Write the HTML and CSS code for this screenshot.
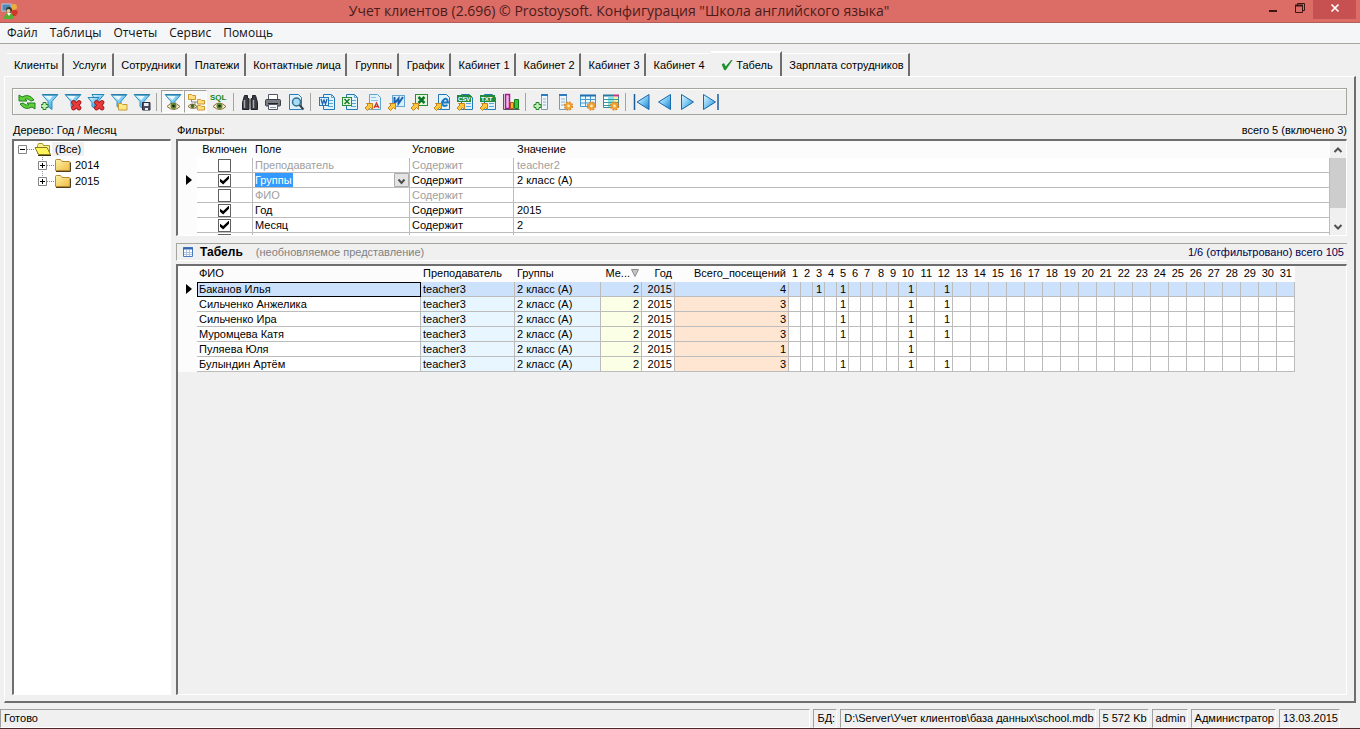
FILE: index.html
```html
<!DOCTYPE html>
<html lang="ru">
<head>
	<meta charset="utf-8">
	<title>Учет клиентов</title>
	<link rel="stylesheet" href="styles.css">
</head>
<body>

<!-- icon sprite -->
<svg class="sprite" aria-hidden="true">
	<defs>
		<linearGradient id="blue" x1="0" y1="0" x2="1" y2="1">
			<stop offset="0" stop-color="#e4f8ff"/>
			<stop offset="0.5" stop-color="#7cc8f2"/>
			<stop offset="1" stop-color="#1580cc"/>
		</linearGradient>
		<linearGradient id="yellow" x1="0" y1="0" x2="1" y2="1">
			<stop offset="0" stop-color="#fff2a8"/>
			<stop offset="1" stop-color="#eebb44"/>
		</linearGradient>
	</defs>
	<symbol id="funnel" viewBox="0 0 18 18">
		<path d="M1 1.5h16l-6 7v8l-4-3v-5z" fill="url(#blue)" stroke="#2f93c4"/>
		<path d="M2 2h14" stroke="#1a6d99"/>
		<path d="M3.500 3h8l-3 4z" fill="#e6f9ff"/>
	</symbol>
	<symbol id="cross" viewBox="0 0 18 18">
		<path d="M9.5 9.5l5.500 5.500m0-5.500l-5.500 5.500" stroke="#a01818" stroke-width="4.6" stroke-linecap="round"/>
		<path d="M9.5 9.5l5.500 5.500m0-5.500l-5.500 5.500" stroke="#ea3a3a" stroke-width="3" stroke-linecap="round"/>
	</symbol>
	<symbol id="eye" viewBox="0 0 18 18">
		<path d="M3 13.5q6-7 13 0q-6 6-13 0z" fill="#f6efd2" stroke="#8d6d3c"/>
		<circle cx="9.5" cy="13" r="3" fill="#5b8a28"/>
		<circle cx="9.5" cy="13" r="1.3" fill="#222"/>
	</symbol>
	<symbol id="doc" viewBox="0 0 18 18">
		<path d="M5.5 1.5h8l3 3v12h-11z" fill="#e3f3fc" stroke="#2379b5"/>
		<path d="M13.5 1.5v3h3M10 7.5h5M10 10.5h5M10 13.5h5" fill="none" stroke="#5aa6d4"/>
	</symbol>
	<symbol id="export" viewBox="0 0 18 18">
		<path d="M2.500 10.500h6v6l-2-2-3 3-2.500-2.500 3-3z" fill="#ffc83c" stroke="#c4821c"/>
	</symbol>
	<symbol id="plus" viewBox="0 0 18 18">
		<path d="M4 9.5h3v2h2v3h-2v2h-3v-2h-2v-3h2z" fill="#c5f0b5" stroke="#23852d"/>
	</symbol>
	<symbol id="gear" viewBox="0 0 18 18">
		<circle cx="12.5" cy="13" r="3.6" fill="none" stroke="#d98318" stroke-width="2" stroke-dasharray="1.8 1"/>
		<circle cx="12.5" cy="13" r="2.4" fill="#ffe8b8" stroke="#efa030" stroke-width="2"/>
	</symbol>
	<symbol id="folder" viewBox="0 0 18 16">
		<path d="M1.500 3.500q0-1 1-1h4l1.500 2h7q1 0 1 1v8h-14.500z" fill="url(#yellow)" stroke="#b98a2c"/>
		<path d="M2 14.500h14.500v-9" fill="none" stroke="#4c4020"/>
	</symbol>
	<symbol id="folder-open" viewBox="0 0 18 16">
		<path d="M3.500 12.500v-8l1-2h4l1 2h6v8z" fill="#fbf28c" stroke="#a8962c"/>
		<path d="M1 6.500h12l3.500 7h-12z" fill="#fff45c" stroke="#8a7c1c"/>
		<path d="M4 14.500h13" stroke="#3b3510"/>
	</symbol>
	<symbol id="marker" viewBox="0 0 6 10">
		<path d="M0 0l6 5l-6 5z" fill="#000"/>
	</symbol>
</svg>

<header class="title-bar">
	<svg class="app-icon" viewBox="0 0 18 18">
		<rect x="1" y="2" width="9" height="7" fill="#4f86b5" stroke="#a9cde2"/>
		<circle cx="13" cy="5" r="3" fill="#e7b13c"/>
		<path d="M11 9q4-3 6 1l-2 4h-4z" fill="#d03828"/>
		<circle cx="8" cy="8" r="3" fill="#303828"/>
		<circle cx="7.500" cy="9" r="2" fill="#e8c49a"/>
		<path d="M3 17q0-6 5-6t4 6z" fill="#54b030"/>
		<path d="M6 11l2 3l2-3z" fill="#fff"/>
	</svg>
	<h1>Учет клиентов (2.696) © Prostoysoft. Конфигурация "Школа английского языка"</h1>
	<div class="win-buttons">
		<button aria-label="Свернуть"><svg viewBox="0 0 12 12"><path d="M2 9h8" stroke="#3c1614" stroke-width="2"/></svg></button>
		<button aria-label="Восстановить"><svg viewBox="0 0 12 12"><path d="M1.500 3.500h7v7h-7zM3.500 3v-1.500h7v7h-1.500" fill="none" stroke="#3c1614"/><path d="M1 3.500h8" stroke="#3c1614" stroke-width="2"/></svg></button>
		<button class="close" aria-label="Закрыть"><svg viewBox="0 0 12 12"><path d="M2.500 2.500l7 7m0-7l-7 7" stroke="#fff" stroke-width="1.700"/></svg></button>
	</div>
</header>

<nav class="menu">
	<a href="#">Файл</a>
	<a href="#">Таблицы</a>
	<a href="#">Отчеты</a>
	<a href="#">Сервис</a>
	<a href="#">Помощь</a>
</nav>

<div class="tabs">
	<button>Клиенты</button>
	<button>Услуги</button>
	<button>Сотрудники</button>
	<button>Платежи</button>
	<button>Контактные лица</button>
	<button>Группы</button>
	<button>График</button>
	<button>Кабинет 1</button>
	<button>Кабинет 2</button>
	<button>Кабинет 3</button>
	<button>Кабинет 4</button>
	<button class="active"><svg viewBox="0 0 12 12"><path d="M1 5.500l2-1l1.500 3.500l6-7l.5.5l-6.500 9.500h-1z" fill="#119a22" stroke="#0c7018" stroke-width=".5"/></svg>Табель</button>
	<button>Зарплата сотрудников</button>
</div>

<main class="panel">
	<div class="toolbar">
		<button aria-label="Обновить"><svg viewBox="0 0 18 18"><path d="M1 2l3 2q7-4 12 3l-3 1q-3-3-6-2l2 2h-8zM17 16l-3-2q-7 4-12-3l3-1q3 3 6 2l-2-2h8z" fill="#62cf36" stroke="#1d8220"/></svg></button>
		<button aria-label="Добавить фильтр"><svg viewBox="0 0 18 18"><use href="#funnel"/><use href="#plus" x="-2"/></svg></button>
		<button aria-label="Удалить фильтр"><svg viewBox="0 0 18 18"><use href="#funnel"/><use href="#cross"/></svg></button>
		<button aria-label="Удалить все фильтры"><svg viewBox="0 0 18 18"><path d="M5 1.500h12l-5 6v7l-3-3v-3z" fill="url(#blue)" stroke="#2387b8"/><path d="M1 4.500h11l-4 5v6l-3-2v-4z" fill="url(#blue)" stroke="#2387b8"/><use href="#cross"/></svg></button>
		<button aria-label="Открыть фильтр"><svg viewBox="0 0 18 18"><use href="#funnel"/><path d="M8.500 10.500h3l1 1h4.500v5.500h-8.500z" fill="#ffe887" stroke="#c69b35"/></svg></button>
		<button aria-label="Сохранить фильтр"><svg viewBox="0 0 18 18"><use href="#funnel"/><path d="M9.500 9.500h7.500v7.500h-7.500z" fill="#4c4c60" stroke="#2c2c3c"/><path d="M11 10h4.500v3h-4.500zM12 15h3v2h-3z" fill="#e8edf5"/></svg></button>
		<i class="sep"></i>
		<button class="pressed" aria-label="Показать фильтры"><svg viewBox="0 0 18 18"><use href="#funnel"/><use href="#eye"/></svg></button>
		<button class="pressed" aria-label="Показать дерево"><svg viewBox="0 0 18 18"><path d="M4.500 5v4h6M8 9v6h3" fill="none" stroke="#888"/><path d="M1.500 1.500h3l1 1h3v4h-7zM10.500 6.500h3l1 1h3v3.500h-7zM10.500 12.500h3l1 1h3v3.500h-7z" fill="#ffe07a" stroke="#cf9932"/><path d="M1 13.500q4-5 9 0q-4 4-9 0z" fill="#f6efd2" stroke="#8d6d3c"/><circle cx="5.500" cy="13" r="2" fill="#456b20"/></svg></button>
		<button aria-label="Показать SQL"><svg viewBox="0 0 18 18"><text class="sql" x="0" y="7">SQL</text><use href="#eye"/></svg></button>
		<i class="sep"></i>
		<button aria-label="Найти"><svg viewBox="0 0 18 18"><path d="M3.500 2.500h3v3h1.500v11h-6.500v-7zM11.500 2.500h3l2 7v7h-6.500v-11h1.500z" fill="#3a3a42" stroke="#202026"/><path d="M8 6.500h2v4h-2z" fill="#777"/><path d="M3.500 7v8M12.500 7v8" stroke="#a8a8b0" stroke-width="1.500"/></svg></button>
		<button aria-label="Печать"><svg viewBox="0 0 18 18"><path d="M4.500 6.500v-5h9v5" fill="#fff" stroke="#556"/><rect x="1.500" y="6.500" width="15" height="6.500" rx="1" fill="#787d86" stroke="#3c4048"/><path d="M4 10.500h10" stroke="#222"/><path d="M4.500 11.500h9v5h-9z" fill="#f6f8fa" stroke="#556"/><path d="M6 14.500h6" stroke="#89a"/></svg></button>
		<button aria-label="Просмотр"><svg viewBox="0 0 18 18"><path d="M2.500 1.500h9l3 3v12h-12z" fill="#dff1fb" stroke="#2a7cb4"/><circle cx="9.500" cy="9" r="4" fill="#a8dcf6" stroke="#31708e" stroke-width="1.500"/><path d="M12.500 12l4 4.500" stroke="#3b4550" stroke-width="2"/></svg></button>
		<i class="sep"></i>
		<button aria-label="Word"><svg viewBox="0 0 18 18"><use href="#doc"/><rect x="1.500" y="4.500" width="9" height="8" fill="#dff1ff" stroke="#2477bd"/><path d="M3 6l1.500 5l1.500-4l1.500 4l1.500-5" fill="none" stroke="#1d62ae" stroke-width="1.300"/></svg></button>
		<button aria-label="Excel"><svg viewBox="0 0 18 18"><use href="#doc"/><rect x="1.500" y="4.500" width="9" height="8" fill="#e6f8df" stroke="#2b8c38"/><path d="M3.500 6l5 5m0-5l-5 5" stroke="#17792a" stroke-width="1.500"/></svg></button>
		<button aria-label="Экспорт RTF"><svg viewBox="0 0 18 18"><path d="M5.500 1.500h8l3 3v12h-11z" fill="#e3f3fc" stroke="#5aa6d4"/><path d="M7 4.500h5M7 7.500h7" stroke="#8cc3e4"/><path d="M10 15l2.500-5l2.500 5M11 13.500h3.500" fill="none" stroke="#cc3522" stroke-width="1.300"/><use href="#export"/></svg></button>
		<button aria-label="Экспорт Word"><svg viewBox="0 0 18 18"><rect x="5.500" y="2.500" width="12" height="11" fill="#d9efff" stroke="#64a7d5"/><path d="M7.500 4v6.500l4-5v5l4.500-6.500" fill="none" stroke="#1d62ae" stroke-width="2"/><use href="#export"/></svg></button>
		<button aria-label="Экспорт Excel"><svg viewBox="0 0 18 18"><rect x="5.500" y="1.500" width="12" height="11" fill="#e5f7de" stroke="#2b8c38"/><path d="M8.500 4l6 6m0-6l-6 6" stroke="#0c7427" stroke-width="2.500"/><use href="#export"/></svg></button>
		<button aria-label="Экспорт HTML"><svg viewBox="0 0 18 18"><path d="M5.500 1.500h8l3 3v12h-11z" fill="#e3f3fc" stroke="#2379b5"/><path d="M14.500 12q-3.500 2-5-.5t1.500-5t4 3h-6" fill="none" stroke="#1b79c4" stroke-width="2"/><use href="#export"/></svg></button>
		<button aria-label="Экспорт CSV"><svg viewBox="0 0 18 18"><use href="#doc"/><rect x="1" y="2" width="14" height="7" fill="#238a39"/><text class="fmt" x="2" y="8">CSV</text><use href="#export"/></svg></button>
		<button aria-label="Экспорт TXT"><svg viewBox="0 0 18 18"><use href="#doc"/><rect x="1" y="2" width="15" height="7" fill="#238a39"/><text class="fmt" x="2" y="8">TXT</text><use href="#export"/></svg></button>
		<button aria-label="Диаграмма"><svg viewBox="0 0 18 18"><path d="M1.500 1v15.500h16" fill="none" stroke="#555"/><path d="M3.500 1.500h4v14h-4z" fill="#f4b4ea" stroke="#a01c8c" stroke-width="1.500"/><path d="M8.500 9.500h3v6h-3z" fill="#ffb030" stroke="#c6501a"/><path d="M12.500 6.500h4v9h-4z" fill="#3cc43c" stroke="#157d20"/></svg></button>
		<i class="sep"></i>
		<button aria-label="Добавить столбец"><svg viewBox="0 0 18 18"><path d="M8.500 1.500h6v15h-6z" fill="#edf6fc" stroke="#8198ad"/><path d="M8 2h7" stroke="#2e7bc0" stroke-width="2"/><path d="M10 6h3m-3 3h3m-3 3h3" stroke="#90b0c8"/><use href="#plus" x="-1"/></svg></button>
		<button aria-label="Настройка столбца"><svg viewBox="0 0 18 18"><path d="M3.500 1.500h7v15h-7z" fill="#edf6fc" stroke="#8198ad"/><path d="M3 2h8" stroke="#2e7bc0" stroke-width="2"/><path d="M5 6h4m-4 3h4m-4 3h4" stroke="#90b0c8"/><use href="#gear"/></svg></button>
		<button aria-label="Настройка таблицы"><svg viewBox="0 0 18 18"><path d="M1.500 2.500h15v11h-15zM1 6.500h16M1 10h16M6.500 3v11M11.500 3v11" fill="#eaf7ff" stroke="#4499cf"/><path d="M1 2.500h16" stroke="#216faf" stroke-width="2"/><use href="#gear"/></svg></button>
		<button aria-label="Цвета таблицы"><svg viewBox="0 0 18 18"><path d="M1.500 2.500h15v12h-15z" fill="#fff" stroke="#408a9b"/><path d="M6 4h6v10h-6z" fill="#83e5ea"/><path d="M12 4h4v10h-4z" fill="#fff0a0"/><path d="M2 6.500h14M2 9.500h14M2 12.500h14" stroke="#3e9a9b"/><path d="M1 2.500h10" stroke="#277b9c" stroke-width="2"/><path d="M11 2.500h6" stroke="#c43a7a" stroke-width="2"/><use href="#gear"/></svg></button>
		<i class="sep"></i>
		<button aria-label="Первая"><svg viewBox="0 0 18 18"><path d="M1.500 1v16" stroke="#1c5d9c" stroke-width="1.500"/><path d="M16 1.500v15l-12-7.500z" fill="url(#blue)" stroke="#1769ac"/></svg></button>
		<button aria-label="Предыдущая"><svg viewBox="0 0 18 18"><path d="M14.500 1.500v15l-12-7.500z" fill="url(#blue)" stroke="#1769ac"/></svg></button>
		<button aria-label="Следующая"><svg viewBox="0 0 18 18"><path d="M2.500 1.500v15l12-7.500z" fill="url(#blue)" stroke="#1769ac"/></svg></button>
		<button aria-label="Последняя"><svg viewBox="0 0 18 18"><path d="M1.500 1.500v15l12-7.500z" fill="url(#blue)" stroke="#1769ac"/><path d="M16 1v16" stroke="#1c5d9c" stroke-width="1.500"/></svg></button>
	</div>

	<div class="columns">
		<section class="side">
			<div class="label">Дерево: Год / Месяц</div>
			<div class="sunken tree">
				<div class="node">
					<svg class="box" viewBox="0 0 9 9"><path d="M.5.5h8v8h-8z" fill="#fff" stroke="#848484"/><path d="M2 4.500h5" stroke="#000"/></svg>
					<i class="dots"></i>
					<svg class="folder"><use href="#folder-open"/></svg>
					<span class="current">(Все)</span>
				</div>
				<div class="branch">
					<div class="node">
						<svg class="box" viewBox="0 0 9 9"><path d="M.5.5h8v8h-8z" fill="#fff" stroke="#848484"/><path d="M2 4.500h5M4.500 2v5" stroke="#000"/></svg>
						<i class="dots"></i>
						<svg class="folder"><use href="#folder"/></svg>
						<span>2014</span>
					</div>
					<div class="node">
						<svg class="box" viewBox="0 0 9 9"><path d="M.5.5h8v8h-8z" fill="#fff" stroke="#848484"/><path d="M2 4.500h5M4.500 2v5" stroke="#000"/></svg>
						<i class="dots"></i>
						<svg class="folder"><use href="#folder"/></svg>
						<span>2015</span>
					</div>
				</div>
			</div>
		</section>

		<section class="work">
			<div class="label"><span>Фильтры:</span><span>всего 5 (включено 3)</span></div>
			<div class="sunken filters">
				<table class="filter-table">
					<colgroup><col class="c-mark"><col class="c-on"><col class="c-field"><col class="c-cond"><col></colgroup>
					<thead>
						<tr><th></th><th>Включен</th><th>Поле</th><th>Условие</th><th>Значение</th></tr>
					</thead>
					<tbody>
						<tr class="off"><td></td><td><input type="checkbox" aria-label="Преподаватель"></td><td>Преподаватель</td><td>Содержит</td><td>teacher2</td></tr>
						<tr>
							<td><svg class="marker"><use href="#marker"/></svg></td>
							<td><input type="checkbox" aria-label="Группы" checked></td>
							<td class="edit">
								<select aria-label="Поле"><option>Группы</option><option>ФИО</option><option>Год</option><option>Месяц</option></select>
								<svg class="arrow" viewBox="0 0 15 14"><path d="M.5.5h14v13h-14z" fill="#e4e4e4" stroke="#adadad"/><path d="M4.500 6.500l3 3.500l3-3.500" fill="none" stroke="#505050" stroke-width="2"/></svg>
							</td>
							<td>Содержит</td><td>2 класс (А)</td>
						</tr>
						<tr class="off"><td></td><td><input type="checkbox" aria-label="ФИО"></td><td>ФИО</td><td>Содержит</td><td></td></tr>
						<tr><td></td><td><input type="checkbox" aria-label="Год" checked></td><td>Год</td><td>Содержит</td><td>2015</td></tr>
						<tr><td></td><td><input type="checkbox" aria-label="Месяц" checked></td><td>Месяц</td><td>Содержит</td><td>2</td></tr>
						<tr><td></td><td><input type="checkbox" aria-label="Новый фильтр"></td><td></td><td></td><td></td></tr>
					</tbody>
				</table>
				<div class="scrollbar">
					<button aria-label="Вверх"><svg viewBox="0 0 10 8"><path d="M1.500 6l3.500-3.500l3.500 3.500" fill="none" stroke="#505050" stroke-width="2"/></svg></button>
					<div class="thumb"></div>
					<button aria-label="Вниз"><svg viewBox="0 0 10 8"><path d="M1.500 2l3.500 3.500l3.500-3.500" fill="none" stroke="#505050" stroke-width="2"/></svg></button>
				</div>
			</div>

			<div class="caption">
				<svg viewBox="0 0 10 10"><path d="M.5.500h9v9h-9z" fill="#fff" stroke="#4a7cc0"/><path d="M0 1.500h10" stroke="#3567b5" stroke-width="2"/><path d="M1 5.500h8M1 7.500h8M3.500 3v6M6.500 3v6" stroke="#a8c4e8"/></svg>
				<h2>Табель</h2>
				<span class="note">(необновляемое представление)</span>
				<span class="count">1/6 (отфильтровано) всего 105</span>
			</div>

			<div class="sunken grid">
				<table class="data">
					<colgroup>
						<col class="c-mark"><col class="c-name"><col class="c-teacher"><col class="c-group"><col class="c-month"><col class="c-year"><col class="c-total">
						<col class="d1" span="7"><col class="d8"><col class="d1"><col class="d10" span="22">
					</colgroup>
					<thead>
						<tr>
							<th></th><th>ФИО</th><th>Преподаватель</th><th>Группы</th>
							<th class="sorted">Ме...<svg viewBox="0 0 8 8"><path d="M.5.500h7l-3.500 7z" fill="#c4c4c4" stroke="#8c8c8c"/></svg></th>
							<th class="num">Год</th><th class="num">Всего_посещений</th>
							<th>1</th><th>2</th><th>3</th><th>4</th><th>5</th><th>6</th><th>7</th><th>8</th><th>9</th><th>10</th><th>11</th><th>12</th><th>13</th><th>14</th><th>15</th><th>16</th><th>17</th><th>18</th><th>19</th><th>20</th><th>21</th><th>22</th><th>23</th><th>24</th><th>25</th><th>26</th><th>27</th><th>28</th><th>29</th><th>30</th><th>31</th>
						</tr>
					</thead>
					<tbody>
						<tr class="selected">
							<td><svg class="marker"><use href="#marker"/></svg></td><td>Баканов Илья</td><td>teacher3</td><td>2 класс (А)</td><td>2</td><td>2015</td><td>4</td>
							<td></td><td></td><td>1</td><td></td><td>1</td><td></td><td></td><td></td><td></td><td>1</td><td></td><td>1</td><td></td><td></td><td></td><td></td><td></td><td></td><td></td><td></td><td></td><td></td><td></td><td></td><td></td><td></td><td></td><td></td><td></td><td></td><td></td>
						</tr>
						<tr>
							<td></td><td>Сильченко Анжелика</td><td>teacher3</td><td>2 класс (А)</td><td>2</td><td>2015</td><td>3</td>
							<td></td><td></td><td></td><td></td><td>1</td><td></td><td></td><td></td><td></td><td>1</td><td></td><td>1</td><td></td><td></td><td></td><td></td><td></td><td></td><td></td><td></td><td></td><td></td><td></td><td></td><td></td><td></td><td></td><td></td><td></td><td></td><td></td>
						</tr>
						<tr>
							<td></td><td>Сильченко Ира</td><td>teacher3</td><td>2 класс (А)</td><td>2</td><td>2015</td><td>3</td>
							<td></td><td></td><td></td><td></td><td>1</td><td></td><td></td><td></td><td></td><td>1</td><td></td><td>1</td><td></td><td></td><td></td><td></td><td></td><td></td><td></td><td></td><td></td><td></td><td></td><td></td><td></td><td></td><td></td><td></td><td></td><td></td><td></td>
						</tr>
						<tr>
							<td></td><td>Муромцева Катя</td><td>teacher3</td><td>2 класс (А)</td><td>2</td><td>2015</td><td>3</td>
							<td></td><td></td><td></td><td></td><td>1</td><td></td><td></td><td></td><td></td><td>1</td><td></td><td>1</td><td></td><td></td><td></td><td></td><td></td><td></td><td></td><td></td><td></td><td></td><td></td><td></td><td></td><td></td><td></td><td></td><td></td><td></td><td></td>
						</tr>
						<tr>
							<td></td><td>Пуляева Юля</td><td>teacher3</td><td>2 класс (А)</td><td>2</td><td>2015</td><td>1</td>
							<td></td><td></td><td></td><td></td><td></td><td></td><td></td><td></td><td></td><td>1</td><td></td><td></td><td></td><td></td><td></td><td></td><td></td><td></td><td></td><td></td><td></td><td></td><td></td><td></td><td></td><td></td><td></td><td></td><td></td><td></td><td></td>
						</tr>
						<tr>
							<td></td><td>Булындин Артём</td><td>teacher3</td><td>2 класс (А)</td><td>2</td><td>2015</td><td>3</td>
							<td></td><td></td><td></td><td></td><td>1</td><td></td><td></td><td></td><td></td><td>1</td><td></td><td>1</td><td></td><td></td><td></td><td></td><td></td><td></td><td></td><td></td><td></td><td></td><td></td><td></td><td></td><td></td><td></td><td></td><td></td><td></td><td></td>
						</tr>
					</tbody>
				</table>
			</div>
		</section>
	</div>
</main>

<footer class="status">
	<span class="grow">Готово</span>
	<span>БД:</span>
	<span>D:\Server\Учет клиентов\база данных\school.mdb</span>
	<span>5 572 Kb</span>
	<span>admin</span>
	<span>Администратор</span>
	<span>13.03.2015</span>
</footer>

</body>
</html>
```
FILE: styles.css
```css
* {
	box-sizing: border-box;
}

body {
	margin: 0;
	min-height: 100vh;
	display: flex;
	flex-direction: column;
	background-color: #f0f0f0;
	color: #000;
	font: 11px/14px "Liberation Sans", Arial, sans-serif;
}

button,
select {
	font: inherit;
	color: inherit;
	padding: 0;
	border: 0;
	background: none;
}

.sprite {
	position: absolute;
	width: 0;
	height: 0;
}

/* title */
.title-bar {
	height: 23px;
	display: flex;
	align-items: center;
	background-color: #dc6c66;
	border-bottom: 1px solid #b25e58;
}

.app-icon {
	width: 18px;
	height: 18px;
	margin-left: 1px;
}

h1 {
	flex: 1;
	margin: 0;
	padding-right: 40px;
	text-align: center;
	font: 14px/22px "Open Sans", sans-serif;
	color: #4a1c1a;
}

.win-buttons {
	align-self: flex-start;
	display: flex;
	padding-right: 4px;
}

.win-buttons button {
	width: 27px;
	height: 19px;
}

.win-buttons svg {
	width: 12px;
	height: 12px;
}

.win-buttons .close {
	width: 43px;
	background-color: #c75050;
}

/* menu */
.menu {
	height: 21px;
	display: flex;
	padding-left: 1px;
	background-color: #f5f6f7;
	border-bottom: 1px solid #a5a59b;
}

.menu a {
	padding: 0 6px;
	font: 12px/19px "Open Sans", sans-serif;
	color: #111;
	text-decoration: none;
}

/* tabs */
.tabs {
	display: grid;
	grid-template-columns: 57px 50px 73px 59px 101px 52px 52px 65px 65px 65px 65px 71px 128px;
	align-items: end;
	height: 32px;
	padding-left: 7px;
}

.tabs button {
	height: 23px;
	padding-left: 3px;
	white-space: nowrap;
	border-top: 1px solid #fff;
	border-right: 2px solid #6e6e6e;
}

.tabs button:nth-child(11) {
	border-right-color: transparent;
}

.tabs .active {
	height: 25px;
	display: flex;
	align-items: center;
	justify-content: center;
	gap: 3px;
	border-top-width: 2px;
}

.tabs svg {
	width: 12px;
	height: 12px;
}

.panel {
	flex: 1;
	display: flex;
	flex-direction: column;
	margin: 0 4px 6px;
	padding: 11px 7px 6px;
	border: 1px solid #fff;
	border-right: 2px solid #6e6e6e;
	border-bottom: 2px solid #6e6e6e;
}

/* toolbar */
.toolbar {
	display: flex;
	align-items: center;
	height: 27px;
	padding-left: 2px;
	border: 1px solid #a5a59f;
	box-shadow: inset 1px 1px #fff;
}

.toolbar button {
	width: 23px;
	height: 23px;
	display: flex;
	align-items: center;
	justify-content: center;
}

.toolbar .pressed {
	background-color: #f8f8f8;
	border: 1px solid;
	border-color: #a0a0a0 #fff #fff #a0a0a0;
}

.toolbar svg {
	flex: none;
	width: 18px;
	height: 18px;
}

.sep {
	width: 8px;
	height: 18px;
	border-left: 3px solid transparent;
	background: linear-gradient(#a5a59f, #a5a59f) no-repeat 0 0 / 1px 18px;
}

.sql {
	font: bold 8px "Liberation Sans", sans-serif;
	fill: #14881c;
}

.fmt {
	font: bold 6px "Liberation Sans", sans-serif;
	fill: #fff;
}

/* content */
.columns {
	flex: 1;
	display: grid;
	grid-template-columns: 159px minmax(0, 1fr);
	gap: 5px;
}

.side,
.work {
	display: flex;
	flex-direction: column;
}

.label {
	display: flex;
	justify-content: space-between;
	height: 24px;
	padding: 8px 0 0 1px;
}

.sunken {
	border: 1px solid #fff;
	border-top: 2px solid #6e6e6e;
	border-left: 2px solid #6e6e6e;
	background-color: #fff;
}

.tree {
	flex: 1;
	padding-left: 4px;
}

.node {
	display: flex;
	align-items: center;
	height: 16px;
}

.box {
	width: 9px;
	height: 9px;
}

.dots {
	width: 7px;
	border-top: 1px dotted #808080;
}

.folder {
	width: 18px;
	height: 16px;
}

.node span {
	padding: 0 3px;
}

.current {
	background-color: #f0f0f0;
}

.branch {
	margin-left: 20px;
	background: repeating-linear-gradient(#999 0 1px, #fff 1px 2px) no-repeat 4px 0 / 1px 24px;
}

table {
	border-spacing: 0;
	table-layout: fixed;
}

th,
td {
	height: 15px;
	padding: 0 2px;
	overflow: hidden;
	white-space: nowrap;
	text-align: left;
	font-weight: normal;
	line-height: 14px;
	background-color: #fff;
	border-right: 1px solid #bcbcbc;
	border-bottom: 1px solid #bcbcbc;
}

th {
	height: 16px;
	background-color: #fcfcfc;
	border-color: transparent;
}

td:first-child {
	border-color: transparent;
	background-color: #fcfcfc;
}

.marker {
	display: block;
	width: 6px;
	height: 10px;
	margin-left: 6px;
}

.c-mark { width: 19px; }
.c-on { width: 56px; }
.c-field { width: 157px; }
.c-cond { width: 104px; }

.filters {
	display: flex;
	height: 97px;
	overflow: hidden;
}

.filter-table {
	flex: 1;
	height: 0;
}

.filter-table th {
	height: 17px;
}

.filter-table td:nth-child(2),
.filter-table th:nth-child(2) {
	padding: 0;
	text-align: center;
}

.filter-table th:last-child,
.filter-table td:last-child {
	padding-left: 3px;
}

.off {
	color: #a0a0a0;
}

input[type="checkbox"] {
	appearance: none;
	display: block;
	width: 13px;
	height: 13px;
	margin: 0 auto;
	border: 1px solid #606060;
	background-color: #fff;
}

input[type="checkbox"]:checked::after {
	content: "";
	display: block;
	width: 9px;
	height: 9px;
	margin: 1px;
	background-color: #000;
	clip-path: polygon(0 35%, 35% 60%, 100% 0, 100% 35%, 35% 100%, 0 70%);
}

.edit {
	position: relative;
}

.edit select {
	display: block;
	appearance: none;
	width: 100%;
	height: 14px;
	color: #fff;
	background: linear-gradient(#3399ff, #3399ff) no-repeat 0 0 / 38px 14px;
}

.arrow {
	position: absolute;
	top: 0;
	right: 0;
	width: 15px;
	height: 14px;
	pointer-events: none;
}

.scrollbar {
	width: 16px;
	display: flex;
	flex-direction: column;
	background-color: #f0f0f0;
}

.scrollbar button {
	height: 17px;
}

.scrollbar svg {
	width: 10px;
	height: 8px;
}

.scrollbar button:last-child {
	margin-top: auto;
}

.thumb {
	height: 50px;
	background-color: #cdcdcd;
}

.caption {
	display: flex;
	align-items: center;
	height: 18px;
	margin: 7px 0 3px;
	padding: 0 3px 0 6px;
	border-top: 1px solid #a5a59f;
	border-left: 1px solid #a5a59f;
	border-bottom: 1px solid #fff;
}

.caption svg {
	width: 10px;
	height: 10px;
}

h2 {
	margin: 0 13px 0 7px;
	font-size: 12px;
}

.note {
	color: #808080;
}

.count {
	margin-left: auto;
	color: #000050;
}

.grid {
	flex: 1;
	background-color: #f0f0f0;
}

.data {
	width: 1117px;
}

.data th {
	line-height: 13px;
}

.c-name { width: 224px; }
.c-teacher { width: 94px; }
.c-group { width: 86px; }
.c-month { width: 41px; }
.c-year { width: 33px; }
.c-total { width: 114px; }
.d1 { width: 12px; }
.d8 { width: 14px; }
.d10 { width: 18px; }

.data th:nth-child(n+8),
.data td:nth-child(n+5),
.data .num,
.data .sorted {
	text-align: right;
}

.sorted svg {
	width: 8px;
	height: 8px;
	margin-left: 1px;
}

.data th:nth-child(n+8),
.data td:nth-child(n+8) {
	padding-left: 0;
}

.data td:nth-child(3),
.data td:nth-child(4) {
	background-color: #e8f7ff;
}

.data td:nth-child(5) {
	background-color: #fbffe6;
}

.data td:nth-child(7) {
	background-color: #ffe6d2;
}

.data .selected td:nth-child(n+2) {
	background-color: #cce2fc;
}

.data .selected td:nth-child(2) {
	outline: 1px solid #000;
	outline-offset: -1px;
}

/* status bar */
.status {
	display: flex;
	gap: 3px;
	height: 20px;
	padding-right: 20px;
	border-bottom: 1px solid #4a2c2e;
}

.status span {
	padding: 0 1px 0 3px;
	line-height: 17px;
	white-space: nowrap;
	border: 1px solid;
	border-color: #a0a0a0 #fff #fff #a0a0a0;
}

.status .grow {
	flex: 1;
}
```
